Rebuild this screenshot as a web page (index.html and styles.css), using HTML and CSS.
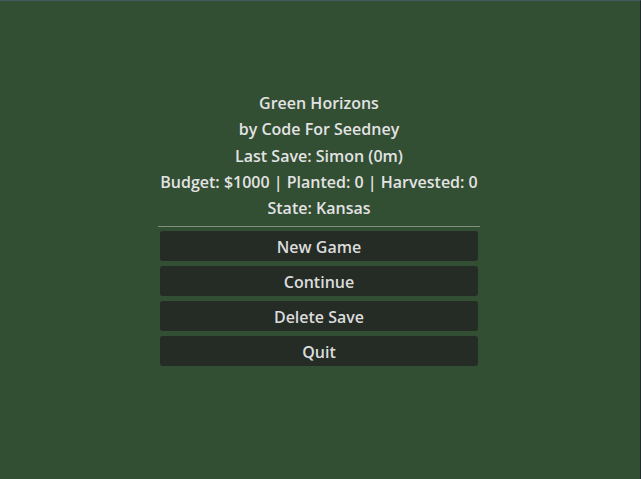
FILE: index.html
```html
<!DOCTYPE html>
<html>
<head>
<meta charset="utf-8">
<link rel="stylesheet" href="styles.css">
</head>
<body>
<div class="screen">
  <div class="menu">
    <div class="info">
      <div class="line">Green Horizons</div>
      <div class="line">by Code For Seedney</div>
      <div class="line">Last Save: Simon (0m)</div>
      <div class="line">Budget: $1000 | Planted: 0 | Harvested: 0</div>
      <div class="line">State: Kansas</div>
    </div>
    <div class="sep"></div>
    <div class="buttons">
      <button class="btn">New Game</button>
      <button class="btn">Continue</button>
      <button class="btn">Delete Save</button>
      <button class="btn">Quit</button>
    </div>
  </div>
</div>
</body>
</html>
```
FILE: styles.css
```css
html, body {
  margin: 0;
  padding: 0;
  width: 641px;
  height: 479px;
  overflow: hidden;
}
.screen {
  box-sizing: border-box;
  width: 641px;
  height: 479px;
  background: #324e33;
  border-top: 1px solid #435a66;
  border-right: 1px solid #1f2b2b;
  padding-top: 89px;
  padding-left: 158px;
  font-family: "Open Sans", "Noto Sans", sans-serif;
  font-weight: 600;
  font-size: 16px;
  color: #e3e3e3;
}
.menu {
  width: 322px;
  display: flex;
  flex-direction: column;
}
.info {
  text-align: center;
}
.line {
  line-height: 26.25px;
  height: 26.25px;
}
.sep {
  height: 1px;
  background: #7d917d;
  margin-top: 5px;
  margin-bottom: 4px;
}
.buttons {
  display: flex;
  flex-direction: column;
  gap: 5px;
  padding: 0 2px 0 2px;
}
.btn {
  box-sizing: border-box;
  height: 30px;
  border: none;
  border-radius: 3px;
  background: #252c26;
  color: #dcdcdc;
  font-family: "Open Sans", "Noto Sans", sans-serif;
  font-weight: 600;
  font-size: 16px;
  padding: 2px 0 0 0;
  margin: 0;
}
```
